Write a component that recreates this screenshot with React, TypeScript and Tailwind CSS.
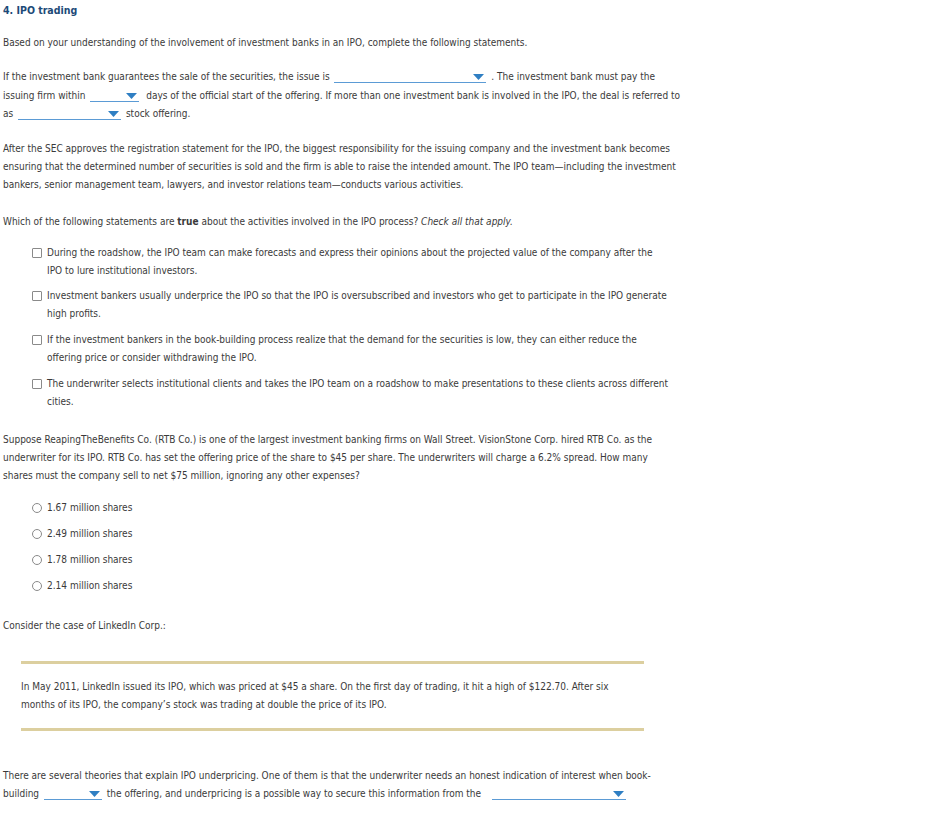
import React from "react";

function Drop({ w }: { w: number }) {
  return (
    <span
      className="relative inline-block h-[13px] align-[-3px] mx-[2px] border-b border-[#5b9bd5]"
      style={{ width: w }}
    >
      <svg
        className="absolute right-[2px] top-[4px]"
        width="11"
        height="6"
        viewBox="0 0 11 6"
      >
        <path d="M0 0 H11 L5.5 6 Z" fill="#2f7fc3" />
      </svg>
    </span>
  );
}

function Check({ children }: { children: React.ReactNode }) {
  return (
    <div className="flex ml-[29px] mt-[7.7px] first:mt-0">
      <span className="mt-[4px] h-[10px] w-[10px] shrink-0 border border-[#8a8a8a] rounded-[1px] bg-white" />
      <div className="ml-[5px]">{children}</div>
    </div>
  );
}

function Radio({ children }: { children: React.ReactNode }) {
  return (
    <div className="flex items-center ml-[29px] mt-[8px] first:mt-0 h-[18px]">
      <span className="h-[10px] w-[10px] shrink-0 border border-[#8a8a8a] rounded-full bg-white" />
      <div className="ml-[5px]">{children}</div>
    </div>
  );
}

export default function App() {
  return (
    <div
      className="w-[938px] min-h-[813px] bg-white text-[#3a3a3a] text-[10px] leading-[18px] pl-[3px] pt-[1px] whitespace-nowrap"
      style={{ fontFamily: '"DejaVu Sans Condensed", "DejaVu Sans", sans-serif' }}
    >
      <div className="text-[#1d4a78] font-bold text-[10.5px]">4. IPO trading</div>

      <p className="mt-[15px]">
        Based on your understanding of the involvement of investment banks in an IPO, complete the following statements.
      </p>

      <p className="mt-[16px] leading-[18.5px]">
        If the investment bank guarantees the sale of the securities, the issue is <Drop w={152} />{" "}
        . The investment bank must pay the
        <br />
        issuing firm within <Drop w={49} /> <span className="inline-block w-[2px]" />days of the official start of the offering. If more than one investment bank is involved in the IPO, the deal is referred to
        <br />
        as <Drop w={103} /> stock offering.
      </p>

      <p className="mt-[16px]">
        After the SEC approves the registration statement for the IPO, the biggest responsibility for the issuing company and the investment bank becomes
        <br />
        ensuring that the determined number of securities is sold and the firm is able to raise the intended amount. The IPO team—including the investment
        <br />
        bankers, senior management team, lawyers, and investor relations team—conducts various activities.
      </p>

      <p className="mt-[19px]">
        Which of the following statements are <b>true</b> about the activities involved in the IPO process? <i>Check all that apply.</i>
      </p>

      <div className="mt-[13px]">
        <Check>
          During the roadshow, the IPO team can make forecasts and express their opinions about the projected value of the company after the
          <br />
          IPO to lure institutional investors.
        </Check>
        <Check>
          Investment bankers usually underprice the IPO so that the IPO is oversubscribed and investors who get to participate in the IPO generate
          <br />
          high profits.
        </Check>
        <Check>
          If the investment bankers in the book-building process realize that the demand for the securities is low, they can either reduce the
          <br />
          offering price or consider withdrawing the IPO.
        </Check>
        <Check>
          The underwriter selects institutional clients and takes the IPO team on a roadshow to make presentations to these clients across different
          <br />
          cities.
        </Check>
      </div>

      <p className="mt-[20px]">
        Suppose ReapingTheBenefits Co. (RTB Co.) is one of the largest investment banking firms on Wall Street. VisionStone Corp. hired RTB Co. as the
        <br />
        underwriter for its IPO. RTB Co. has set the offering price of the share to $45 per share. The underwriters will charge a 6.2% spread. How many
        <br />
        shares must the company sell to net $75 million, ignoring any other expenses?
      </p>

      <div className="mt-[14px]">
        <Radio>1.67 million shares</Radio>
        <Radio>2.49 million shares</Radio>
        <Radio>1.78 million shares</Radio>
        <Radio>2.14 million shares</Radio>
      </div>

      <p className="mt-[22px]">Consider the case of LinkedIn Corp.:</p>

      <div className="ml-[18px] w-[623px] mt-[26px] border-t-[3px] border-b-[3px] border-[#dccf9f] pt-[14px] pb-[14px]">
        <p>
          In May 2011, LinkedIn issued its IPO, which was priced at $45 a share. On the first day of trading, it hit a high of $122.70. After six
          <br />
          months of its IPO, the company’s stock was trading at double the price of its IPO.
        </p>
      </div>

      <p className="mt-[36px]">
        There are several theories that explain IPO underpricing. One of them is that the underwriter needs an honest indication of interest when book-
        <br />
        building <Drop w={58} />{" "}
        the offering, and underpricing is a possible way to secure this information from the{" "}
        <span className="inline-block w-[6px]" />
        <Drop w={134} />
      </p>
    </div>
  );
}
